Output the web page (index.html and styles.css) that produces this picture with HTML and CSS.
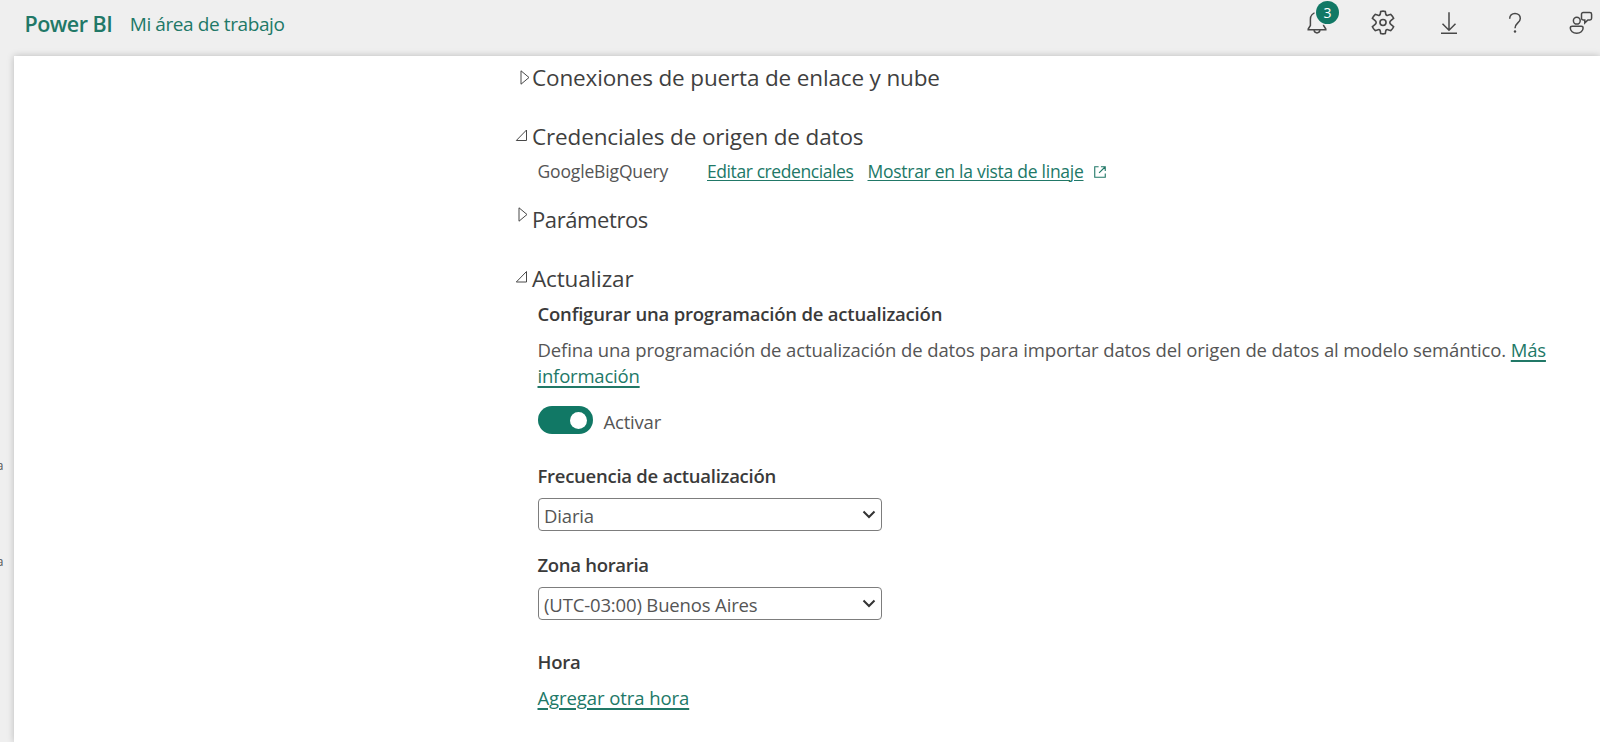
FILE: index.html
```html
<!DOCTYPE html>
<html lang="es">
<head>
<meta charset="utf-8">
<title>Power BI</title>
<link rel="stylesheet" href="styles.css">
</head>
<body>
<header class="topbar">
  <div class="brand"><span class="logo">Power BI</span><span class="workspace">Mi área de trabajo</span></div>
  <nav class="actions">
    <button class="action" aria-label="Notificaciones">
      <svg width="28" height="28" viewBox="0 0 28 28"><path d="M13.700 3.700c-4 0-6.300 3-6.300 6.500v6.300L5.200 20v.8h17.600V20l-2.200-3.500v-6.300c0-3.500-2.900-6.500-6.900-6.500z"/><path d="M11 21.200c.3 1.700 1.400 2.700 3 2.700s2.700-1 3-2.700"/></svg>
      <span class="badge">3</span>
    </button>
    <button class="action" aria-label="Configuración">
      <svg width="26" height="25" viewBox="0 0 24 24" preserveAspectRatio="none"><path d="M9.900 1.400Q12 .8 14.100 1.400L14.600 4.100Q15 5.600 16.500 5.100L19.100 4.200Q20.900 5.800 21.800 7.900L19.500 9.900Q18.300 10.900 18.300 12T19.500 14.100L21.800 16.100Q20.900 18.200 19.100 19.800L16.500 18.900Q15 18.400 14.600 19.900L14.100 22.600Q12 23.200 9.900 22.600L9.400 19.900Q9 18.400 7.500 18.900L4.900 19.800Q3.100 18.200 2.200 16.100L4.500 14.100Q5.700 13.100 5.700 12T4.500 9.900L2.200 7.900Q3.100 5.800 4.900 4.200L7.500 5.100Q9 5.600 9.400 4.100z"/><circle cx="12" cy="12" r="2.800"/></svg>
    </button>
    <button class="action" aria-label="Descargar">
      <svg width="28" height="28" viewBox="0 0 28 28"><path d="M14 3.200v18M7.500 14.800l6.500 6.500 6.500-6.500M6 24.200h16"/></svg>
    </button>
    <button class="action" aria-label="Ayuda">
      <svg width="28" height="28" viewBox="0 0 28 28"><path d="M8.700 9.700c0-3.200 2.200-5.300 5.300-5.300s5.300 2.100 5.300 5c0 4.600-5.300 4.500-5.300 9.800"/><circle class="dot" cx="14" cy="22.500" r="1.200"/></svg>
    </button>
    <button class="action" aria-label="Comentarios">
      <svg width="28" height="28" viewBox="0 0 28 28"><circle cx="9.800" cy="11.700" r="3.400"/><path d="M5.200 17.300h9c1.200 0 1.900.8 1.900 1.700 0 3-2.700 5.300-6.400 5.300s-6.400-2.300-6.400-5.300c0-.9.700-1.700 1.900-1.700z"/><path d="M16.200 3.500h6.700c1 0 1.700.7 1.700 1.700v4.100c0 1-.7 1.700-1.700 1.700h-2l-3.100 2.900V11h-1.600c-1 0-1.700-.7-1.700-1.700V5.200c0-1 .7-1.700 1.700-1.700z"/></svg>
    </button>
  </nav>
</header>
<div class="body">
  <aside class="rail"><span>a</span><span>a</span></aside>
  <main class="panel">
    <h2 class="section gateway"><span class="marker"><svg class="shut" width="10" height="15" viewBox="0 0 10 15"><path d="M1 .8v13.400l8-6.700z"/></svg></span><span>Conexiones de puerta de enlace y nube</span></h2>
    <h2 class="section credentials"><span class="marker"><svg width="13" height="13" viewBox="0 0 13 13"><path d="M11.500 1v10.500H1.300z"/></svg></span><span>Credenciales de origen de datos</span></h2>
    <div class="source">
      <span class="source-name">GoogleBigQuery</span>
      <a class="edit">Editar credenciales</a>
      <a class="lineage">Mostrar en la vista de linaje</a>
      <svg class="external" width="12" height="12" viewBox="0 0 13 13"><path d="M5 .8H.8v11.400h11.400V8M7.500.8h4.700v4.700M12.200.8L5.500 7.500"/></svg>
    </div>
    <h2 class="section parameters"><span class="marker"><svg class="shut high" width="10" height="15" viewBox="0 0 10 15"><path d="M1 .8v13.400l8-6.700z"/></svg></span><span class="params-text">Parámetros</span></h2>
    <h2 class="section update"><span class="marker"><svg width="13" height="13" viewBox="0 0 13 13"><path d="M11.500 .5v10.500H1.300z"/></svg></span><span>Actualizar</span></h2>
    <div class="refresh">
      <h3 class="label first">Configurar una programación de actualización</h3>
      <p class="desc">Defina una programación de actualización de datos para importar datos del origen de datos al modelo semántico. <a class="strong-link">Más<br>información</a></p>
      <div class="switch-row"><span class="switch"><span class="knob"></span></span><span class="switch-text">Activar</span></div>
      <h3 class="label frequency">Frecuencia de actualización</h3>
      <div class="select"><span>Diaria</span><svg width="14" height="9" viewBox="0 0 14 9"><path d="M1.500 1.500L7 7l5.500-5.500"/></svg></div>
      <h3 class="label zone">Zona horaria</h3>
      <div class="select"><span>(UTC-03:00) Buenos Aires</span><svg width="14" height="9" viewBox="0 0 14 9"><path d="M1.500 1.500L7 7l5.500-5.500"/></svg></div>
      <h3 class="label hour">Hora</h3>
      <p class="add"><a class="strong-link">Agregar otra hora</a></p>
    </div>
  </main>
</div>
</body>
</html>
```

FILE: styles.css
```css
* { box-sizing: border-box; }
body { margin: 0; width: 1600px; height: 742px; overflow: hidden; background: #efefef; color: #555; font-family: "Open Sans", "Noto Sans", sans-serif; white-space: nowrap; }
h2, h3, p { margin: 0; font-weight: 400; }
svg { display: block; fill: none; stroke: #484848; stroke-width: 1.5; flex: none; }

.topbar { display: flex; justify-content: space-between; height: 56px; padding-left: 24.500px; }
.brand { display: flex; height: 48px; line-height: 48px; color: #217867; gap: 17.500px; }
.logo { font-size: 21.500px; font-weight: 600; letter-spacing: -0.52px; }
.workspace { font-size: 19px; letter-spacing: -0.4px; }
.actions { display: flex; height: 45px; margin-right: -14px; }
.action { position: relative; display: grid; place-items: center; width: 66px; padding: 0; border: 0; background: none; }
.badge { position: absolute; left: 32px; top: 1px; width: 23px; height: 23px; border-radius: 50%; background: #117865; box-shadow: 0 0 0 1.500px #efefef; color: #fff; font: 14px/23px "Open Sans", sans-serif; text-align: center; }
.action .dot { fill: #484848; stroke: none; }

.body { display: flex; height: 686px; }
.rail { display: flex; flex-direction: column; align-items: flex-end; gap: 76px; width: 14px; padding: 400px 10.500px 0 0; font-size: 12px; line-height: 20px; }
.panel { flex: 1; padding: 6px 0 0 500px; background: #fff; box-shadow: 0 0 7px rgba(0, 0, 0, .22); }

.section { display: flex; height: 32px; color: #3f3f3f; font-size: 22.500px; line-height: 32px; letter-spacing: -0.15px; }
.marker { width: 18px; padding: 8px 0 0 .5px; }
.marker svg { stroke-width: 1; }
.marker .shut { margin-left: 5px; }
.marker .high { margin: -4px 0 0 3px; }
.credentials { margin-top: 27px; }
.parameters { margin-top: 19px; }
.params-text { font-size: 22px; letter-spacing: -0.4px; }
.update { margin-top: 28px; }

.source { display: flex; height: 26px; margin-top: 5px; padding-left: 23.500px; font-size: 17.500px; line-height: 26px; }
.source-name { width: 169.500px; letter-spacing: -0.15px; }
.source a { color: #217867; text-decoration: underline; text-decoration-thickness: 1px; text-underline-offset: 2px; }
.edit { width: 160.500px; letter-spacing: -0.41px; }
.lineage { letter-spacing: -0.27px; }
.external { margin: 8px 0 0 10px; stroke: #217867; stroke-width: 1.200; }

.refresh { padding-left: 23.500px; font-size: 18.500px; line-height: 26px; }
.label { height: 26px; color: #3a3a3a; font-size: 18.500px; font-weight: 600; }
.first { margin-top: 6px; letter-spacing: -0.2px; }
.desc { height: 52px; margin-top: 10px; letter-spacing: -0.11px; }
.strong-link { color: #217867; text-decoration: underline; text-decoration-thickness: 2px; text-underline-offset: 3px; letter-spacing: -0.2px; }
.switch-row { display: flex; gap: 10.500px; height: 28px; margin-top: 17px; padding-left: .5px; }
.switch { display: flex; justify-content: flex-end; align-items: center; width: 55px; height: 28px; padding-right: 6px; border-radius: 14px; background: #117865; }
.knob { width: 17px; height: 17px; border-radius: 50%; background: #fff; }
.switch-text { line-height: 31px; letter-spacing: -0.2px; }
.frequency { margin-top: 29px; letter-spacing: -0.27px; }
.zone { margin-top: 21px; letter-spacing: -0.3px; }
.hour { margin-top: 29px; letter-spacing: -0.2px; }
.select { display: flex; justify-content: space-between; width: 344px; height: 33px; margin: 9px 0 0 .5px; padding: 0 5px; border: 1px solid #7d7d7d; border-radius: 4px; line-height: 34px; letter-spacing: -0.15px; }
.select svg { margin-top: 11px; stroke: #333; stroke-width: 2; }
.add { margin-top: 10px; }
.add .strong-link { letter-spacing: -0.08px; }
```
